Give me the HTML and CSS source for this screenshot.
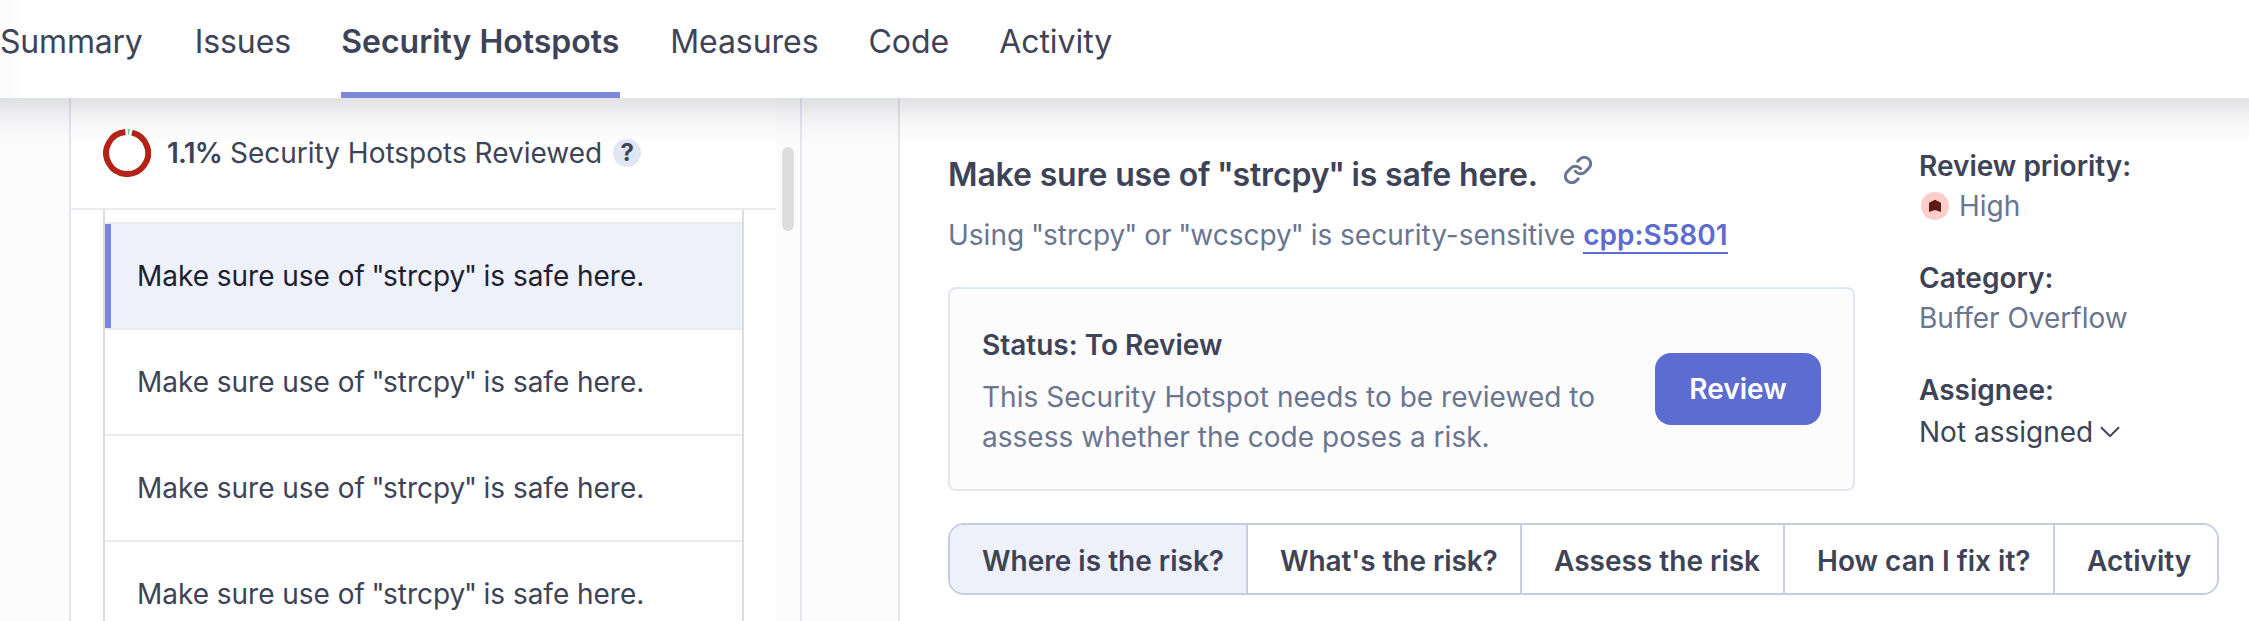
FILE: index.html
```
<!DOCTYPE html>
<html lang="en">
<head>
<meta charset="utf-8">
<title>Security Hotspots</title>
<link rel="stylesheet" href="styles.css">
</head>
<body>
<nav class="nav">
  <a class="nav-item">Summary</a>
  <a class="nav-item">Issues</a>
  <a class="nav-item active">Security Hotspots</a>
  <a class="nav-item">Measures</a>
  <a class="nav-item">Code</a>
  <a class="nav-item">Activity</a>
</nav>
<div class="page">
  <aside class="sidebar">
    <div class="list-pane">
      <div class="list-head">
        <svg class="donut" viewBox="0 0 48 48" width="48" height="48">
          <path d="M29 3.6A21 21 0 1 1 22.4 3.1" fill="none" stroke="#b42318" stroke-width="6"/>
          <path d="M24.9 0h2l-1 6h-1z" fill="#6cd6a4"/>
        </svg>
        <p class="reviewed"><b>1.1%</b> Security Hotspots Reviewed</p>
        <span class="help">?</span>
      </div>
      <ul class="hotspots">
        <li class="spacer"></li>
        <li class="hotspot selected">Make sure use of <span class="q">"</span>strcpy<span class="q">"</span> is safe here.</li>
        <li class="hotspot">Make sure use of <span class="q">"</span>strcpy<span class="q">"</span> is safe here.</li>
        <li class="hotspot">Make sure use of <span class="q">"</span>strcpy<span class="q">"</span> is safe here.</li>
        <li class="hotspot">Make sure use of <span class="q">"</span>strcpy<span class="q">"</span> is safe here.</li>
      </ul>
    </div>
    <div class="scrollbar"><div class="thumb"></div></div>
  </aside>
  <main class="main">
    <div class="overview">
      <section class="detail">
        <div class="title-row">
          <h1 class="title">Make sure use of <span class="q">"</span>strcpy<span class="q">"</span> is safe here.</h1>
          <svg class="link-icon" viewBox="1 1 22 22" width="28" height="28" fill="none" stroke="#6a7590" stroke-width="2.3" stroke-linecap="round">
            <path d="M10 13a5 5 0 0 0 7.54.54l3-3a5 5 0 0 0-7.07-7.07l-1.72 1.71"/>
            <path d="M14 11a5 5 0 0 0-7.54-.54l-3 3a5 5 0 0 0 7.07 7.07l1.71-1.71"/>
          </svg>
        </div>
        <p class="subtitle">Using <span class="q">"</span>strcpy<span class="q">"</span> or <span class="q">"</span>wcscpy<span class="q">"</span> is security-sensitive <a class="rule">cpp:S5801</a></p>
        <div class="status">
          <div class="status-text">
            <h2>Status: To Review</h2>
            <p>This Security Hotspot needs to be reviewed to assess whether the code poses a risk.</p>
          </div>
          <button class="review">Review</button>
        </div>
      </section>
      <dl class="meta">
        <dt>Review priority:</dt>
        <dd class="priority">
          <svg viewBox="0 0 28 28" width="28" height="28"><circle cx="14" cy="14" r="14" fill="#ffcdca"/><path d="M8 10.7 14 7.8l6 2.9V20l-6-1.9L8 20z" fill="#5d1a12"/></svg>
          High
        </dd>
        <dt>Category:</dt>
        <dd>Buffer Overflow</dd>
        <dt>Assignee:</dt>
        <dd class="assignee">Not assigned
          <svg viewBox="0 0 20 12" width="20" height="12" fill="none" stroke="#3e4357" stroke-width="2"><path d="M1 1.2l9 9 9-9"/></svg>
        </dd>
      </dl>
    </div>
    <div class="tabs">
      <button class="tab where on">Where is the risk?</button>
      <button class="tab what">What's the risk?</button>
      <button class="tab assess">Assess the risk</button>
      <button class="tab fix">How can I fix it?</button>
      <button class="tab">Activity</button>
    </div>
  </main>
</div>
</body>
</html>
```
FILE: styles.css
```
* { box-sizing: border-box; margin: 0; padding: 0; }
body {
  width: 2249px;
  height: 621px;
  overflow: hidden;
  display: flex;
  flex-direction: column;
  background: #fcfcfd;
  font: 400 28px/40px Inter, sans-serif;
  color: #3e4357;
}
.nav {
  position: relative;
  z-index: 1;
  flex: none;
  display: flex;
  height: 98px;
  background: linear-gradient(90deg, #fbfbfb, #fff 30px);
}
/* Shadow cast over the content below the bar */
.nav::after {
  content: "";
  position: absolute;
  top: 100%;
  left: 0;
  right: 0;
  height: 48px;
  background: linear-gradient(rgba(29, 33, 47, .13), rgba(29, 33, 47, .11) 14%, rgba(29, 33, 47, .06) 38%, rgba(29, 33, 47, .03) 58%, rgba(29, 33, 47, .01) 80%, transparent);
  pointer-events: none;
}
.nav-item { margin-right: 50px; padding-top: 22px; font-size: 32px; white-space: nowrap; letter-spacing: -.05px; }
.nav-item:first-child { margin-right: 52px; letter-spacing: -.2px; }
.nav-item.active {
  width: 279px;
  font-weight: 600;
  border-bottom: 6px solid #7b87d9;
  letter-spacing: 0;
}
.page { flex: 1; display: flex; min-height: 0; }
.q { margin-left: -1.2px; letter-spacing: -1.4px; }

.sidebar {
  display: flex;
  flex: none;
  width: 733px;
  margin-left: 69px;
  border: solid #e1e6f3;
  border-width: 0 2px;
}
.list-pane { width: 705px; background: #fff; }
.list-head {
  display: flex;
  align-items: center;
  height: 112px;
  padding-left: 32px;
  border-bottom: 2px solid #ebebeb;
}
.donut { flex: none; margin-right: 16px; }
.reviewed { white-space: nowrap; }
.reviewed b { font-weight: 600; letter-spacing: -.8px; }
.help {
  width: 28px;
  height: 28px;
  margin-left: 11px;
  border-radius: 50%;
  background: #e1e6f3;
  font-size: 24px;
  font-weight: 700;
  line-height: 28px;
  text-align: center;
}
.hotspots {
  width: 641px;
  margin-left: 32px;
  border: solid #ddd;
  border-width: 0 2px;
  list-style: none;
}
.spacer { height: 14px; border-bottom: 2px solid #ebebeb; }
.hotspot {
  height: 106px;
  padding: 32px 0 0 32px;
  border-bottom: 2px solid #ebebeb;
  letter-spacing: -.03px;
}
.selected {
  color: #1d212f;
  background: linear-gradient(90deg, #7b87d9 6px, #eef1fa 6px);
}
.scrollbar { flex: 1; padding: 49px 6px 0; }
.thumb { height: 84px; border-radius: 6px; background: #ddd; }

.main {
  flex: 1;
  margin-left: 96px;
  padding: 0 30px 0 48px;
  border-left: 2px solid #e1e6f3;
  background: #fff;
}
.overview { display: flex; gap: 64px; height: 425px; }
.detail { width: 907px; padding-top: 57px; }
.title-row { display: flex; gap: 26px; }
.title {
  font-size: 32px;
  line-height: 40px;
  font-weight: 600;
  white-space: nowrap;
  letter-spacing: -.14px;
}
.link-icon { margin-top: 1px; }
.subtitle { margin-top: 20px; color: #6a7590; white-space: nowrap; }
.subtitle .q { margin-left: -1px; letter-spacing: -1.1px; }
.rule {
  color: #5d6cd0;
  font-weight: 600;
  border-bottom: 2px solid #5d6cd0;
}
.status {
  display: flex;
  align-items: center;
  justify-content: space-between;
  height: 204px;
  margin-top: 32px;
  padding: 0 32px;
  border: 2px solid #e1e6f3;
  border-radius: 8px;
  background: #fcfcfd;
}
.status-text { width: 625px; padding-top: 4px; }
.status h2 { font-size: 28px; font-weight: 600; margin-bottom: 12px; }
.status p { color: #6a7590; letter-spacing: .03px; }
.review {
  width: 166px;
  height: 72px;
  border: 0;
  border-radius: 16px;
  background: #5d6cd0;
  color: #fff;
  font: 600 28px/40px Inter, sans-serif;
}
.meta { padding-top: 48px; white-space: nowrap; }
.meta dt { font-weight: 600; }
.meta dd { margin-bottom: 32px; color: #6a7590; }
.meta .priority { display: flex; align-items: center; gap: 10px; padding-left: 2px; }
.meta .assignee { display: flex; align-items: center; gap: 7px; padding-top: 2px; color: #3e4357; }

.tabs {
  display: flex;
  height: 72px;
  border: 2px solid #c5cde3;
  border-radius: 16px;
  overflow: hidden;
}
.tab {
  flex: 1;
  padding: 3px 0 0 32px;
  border: 0;
  background: #fff;
  color: #3e4357;
  font: 600 28px/40px Inter, sans-serif;
  text-align: left;
  white-space: nowrap;
}
.tab + .tab { border-left: 2px solid #c5cde3; }
.tab.on { background: #eef1fa; }
.where { flex: 0 0 296px; }
.what { flex: 0 0 274px; letter-spacing: -.08px; }
.assess { flex: 0 0 263px; }
.fix { flex: 0 0 270px; }
```
